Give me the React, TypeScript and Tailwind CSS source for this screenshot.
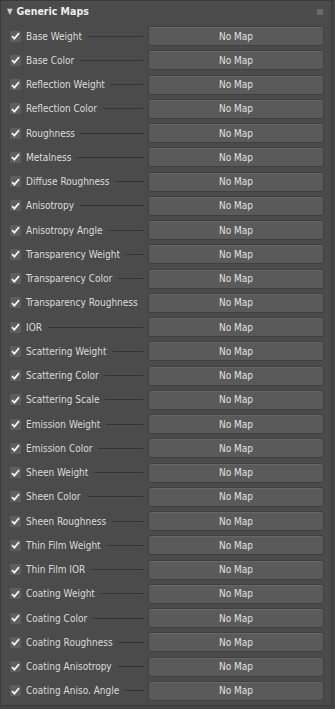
const maps = [
  'Base Weight',
  'Base Color',
  'Reflection Weight',
  'Reflection Color',
  'Roughness',
  'Metalness',
  'Diffuse Roughness',
  'Anisotropy',
  'Anisotropy Angle',
  'Transparency Weight',
  'Transparency Color',
  'Transparency Roughness',
  'IOR',
  'Scattering Weight',
  'Scattering Color',
  'Scattering Scale',
  'Emission Weight',
  'Emission Color',
  'Sheen Weight',
  'Sheen Color',
  'Sheen Roughness',
  'Thin Film Weight',
  'Thin Film IOR',
  'Coating Weight',
  'Coating Color',
  'Coating Roughness',
  'Coating Anisotropy',
  'Coating Aniso. Angle',
]

export default function App() {
  return (
    <div className="h-[709px] w-[335px] bg-[#444444] font-['DejaVu_Sans_Condensed','DejaVu_Sans',sans-serif] text-[10px] text-[#dcdcdc]">
      <div className="h-[706px] w-[332px] border border-[#3a3a3a] bg-[#4b4b4b]">
        <div className="flex h-[22px] items-center pl-[6px] pr-[8px]">
          <span className="text-[8px] leading-none text-[#d0d0d0]">▼</span>
          <span className="ml-[4px] text-[10.5px] font-bold text-[#ededed]">Generic Maps</span>
          <span className="ml-auto h-[6px] w-[6px] bg-[#6a6a6a]" />
        </div>
        <div className="flex flex-col pt-[1px]">
          {maps.map((nombre) => (
            <FilaMapa key={nombre} nombre={nombre} />
          ))}
        </div>
      </div>
    </div>
  )
}

function FilaMapa({ nombre }: { nombre: string }) {
  return (
    <div className="flex h-[24.25px] items-center pl-[9px]">
      <div className="flex w-[133px] shrink-0 items-center">
        <span className="flex h-[11px] w-[11px] shrink-0 items-center justify-center rounded-[1px] bg-[#5e5e5e]">
          <svg width="9" height="8" viewBox="0 0 9 8">
            <path d="M1 4.2 L3.4 6.6 L8 1.2" fill="none" stroke="#f2f2f2" strokeWidth="1.8" />
          </svg>
        </span>
        <span className="ml-[5px] whitespace-nowrap">{nombre}</span>
        <span className="ml-[6px] h-px min-w-0 flex-1 bg-[#333333]" />
      </div>
      <button className="ml-[5px] h-[20px] w-[176px] shrink-0 rounded-[3px] border border-[#3f3f3f] bg-[#5a5a5a] text-[10px] text-[#e2e2e2] shadow-[inset_0_1px_0_#686868]">
        No Map
      </button>
    </div>
  )
}
